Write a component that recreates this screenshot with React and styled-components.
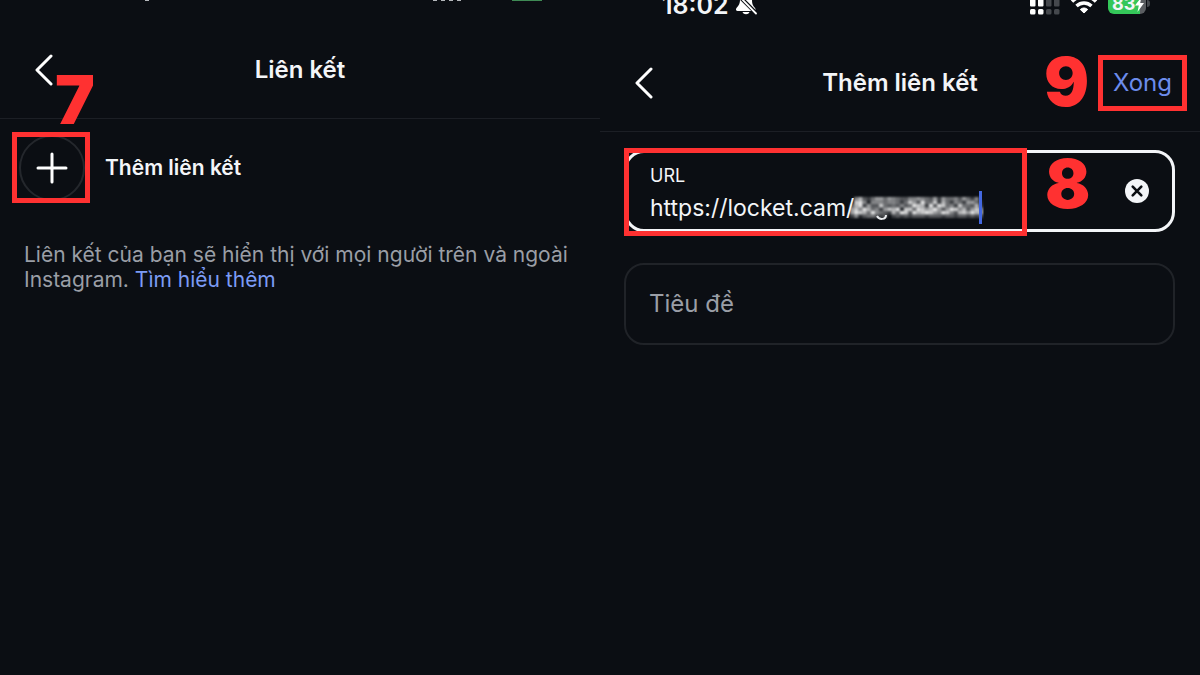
import React, { useState } from "react";
import styled, { createGlobalStyle } from "styled-components";

const GlobalStyle = createGlobalStyle`
  * {
    box-sizing: border-box;
  }
  body {
    margin: 0;
    background: #0b0e13;
    color: #f3f5f8;
    font-family: Inter, "Noto Sans", sans-serif;
  }
  button, input {
    font: inherit;
    color: inherit;
    background: none;
    border: none;
    padding: 0;
  }
  button {
    cursor: pointer;
  }
`;

const Screens = styled.main`
  display: grid;
  grid-template-columns: 1fr 1fr;
  min-height: 100vh;
`;

const Screen = styled.section`
  min-width: 0;
`;

const StatusBar = styled.div`
  display: flex;
  align-items: flex-end;
  justify-content: space-between;
  height: ${(p) => p.$height};
  padding: ${(p) => p.$padding};
  overflow: hidden;
`;

const StatusGroup = styled.div`
  display: flex;
  align-items: flex-end;
  gap: ${(p) => p.$gap || "4px"};
`;

const Clock = styled.span`
  font-size: 25px;
  font-weight: 600;
  line-height: 20px;
`;

const Header = styled.header`
  display: grid;
  grid-template-columns: 1fr auto 1fr;
  align-items: center;
  padding: 44px 28px 24px;
  border-bottom: 1px solid #1c1f25;
`;

const BackButton = styled.button`
  display: flex;
  justify-self: start;
  align-items: center;
  height: 48px;
`;

const Title = styled.h1`
  margin: 0;
  font-size: 24px;
  font-weight: 600;
  line-height: 32px;
`;

const Marked = styled.div`
  position: relative;
  display: flex;
  justify-self: end;
`;

const MarkBox = styled.span`
  position: absolute;
  inset: ${(p) => p.$inset};
  border: 5px solid #ff3131;
  pointer-events: none;
`;

const MarkNumber = styled.span`
  position: absolute;
  top: ${(p) => p.$top};
  left: ${(p) => p.$left};
  color: #ff3131;
  font-size: 67px;
  font-weight: 900;
  line-height: 70px;
  pointer-events: none;
`;

const DoneButton = styled.button`
  color: #6c8cec;
  font-size: 24px;
  line-height: 32px;
`;

const AddRow = styled.div`
  display: flex;
  align-items: center;
  gap: 20px;
  padding: 16px 19px;
`;

const AddButton = styled.button`
  display: flex;
  align-items: center;
  justify-content: center;
  width: 66px;
  height: 66px;
  border: 2px solid #24272c;
  border-radius: 50%;
`;

const AddLabel = styled.label`
  font-size: 21px;
  font-weight: 600;
  line-height: 28px;
  cursor: pointer;
`;

const Note = styled.p`
  margin: 0;
  padding: 25px 24px;
  color: #9a9ea6;
  font-size: 21px;
  line-height: 25px;
`;

const NoteLink = styled.a`
  color: #7c9cf5;
  text-decoration: none;
`;

const Form = styled.form`
  display: flex;
  flex-direction: column;
  gap: 31px;
  padding: 18px 25px 18px 24px;
`;

const Field = styled.div`
  position: relative;
  display: flex;
  align-items: center;
  justify-content: space-between;
  height: 82px;
  padding: 0 23px;
  border: ${(p) => (p.$active ? "3px solid #f3f5f8" : "2px solid #202328")};
  border-radius: 20px;
`;

const UrlBlock = styled.div`
  padding-top: 5px;
`;

const FieldLabel = styled.label`
  display: block;
  font-size: 18px;
  line-height: 28px;
`;

const UrlLine = styled.div`
  display: flex;
  align-items: center;
  height: 36px;
`;

const UrlInput = styled.input`
  field-sizing: content;
  font-size: 23px;
  line-height: 32px;
  outline: none;
`;

const Caret = styled.span`
  width: 3px;
  height: 33px;
  margin-left: -5px;
  background: #4468e0;
`;

const TitleInput = styled.input`
  flex: 1;
  min-width: 0;
  font-size: 24px;
  line-height: 32px;
  outline: none;

  &::placeholder {
    color: #9a9ea6;
    opacity: 1;
  }
`;

const ClearButton = styled.button`
  display: flex;
`;

function BackIcon() {
  return (
    <svg width="32" height="32" viewBox="0 0 32 32" fill="none">
      <path
        d="M23 2L9 16L23 30"
        stroke="#fff"
        strokeWidth="3"
        strokeLinecap="round"
        strokeLinejoin="round"
      />
    </svg>
  );
}

function PlusIcon() {
  return (
    <svg width="32" height="32" viewBox="0 0 32 32">
      <path d="M16 2V30M2 16H30" stroke="#fff" strokeWidth="3" strokeLinecap="round" />
    </svg>
  );
}

function ClearIcon() {
  return (
    <svg width="24" height="24" viewBox="0 0 24 24">
      <circle cx="12" cy="12" r="12" fill="#f3f5f8" />
      <path d="M7.7 7.7L16.3 16.3M16.3 7.7L7.7 16.3" stroke="#0b0e13" strokeWidth="2.6" strokeLinecap="round" />
    </svg>
  );
}

function MutedBellIcon() {
  return (
    <svg width="22" height="20" viewBox="0 0 22 20">
      <path
        d="M11 -4C7 -4 5 0 5 4C5 9 4 10 1.5 13C0.5 14.5 1 16 2.5 16H19C20.5 16 21 14.5 20 13C17.5 10 17 9 17 4C17 0 15 -4 11 -4Z"
        fill="#fff"
      />
      <path d="M7.5 17H14.5C13.5 20 8.5 20 7.5 17Z" fill="#fff" />
      <path d="M3 0L22 19" stroke="#0b0e13" strokeWidth="4" />
      <path d="M3 0L21 18.5" stroke="#fff" strokeWidth="1.8" strokeLinecap="round" />
    </svg>
  );
}

function SignalIcon() {
  return (
    <svg width="30" height="15" viewBox="0 0 30 15">
      {[0, 8, 16, 24].map((x, i) => (
        <g key={x} fill={i < 2 ? "#fff" : "#45484d"}>
          <rect x={x} y="-2" width="5.5" height="8.5" rx="1" />
          <rect x={x} y="9" width="5.5" height="5.5" rx="1.5" />
        </g>
      ))}
    </svg>
  );
}

function WifiIcon() {
  return (
    <svg width="28" height="20" viewBox="0 0 28 20">
      <path d="M2 6.5C9 -0.5 19 -0.5 26 6.5" stroke="#fff" strokeWidth="3.5" fill="none" />
      <path d="M6.5 11C11 7 17 7 21.5 11" stroke="#fff" strokeWidth="3.5" fill="none" />
      <path d="M14 18L10.3 14.5C12.5 12.5 15.5 12.5 17.7 14.5Z" fill="#fff" stroke="#fff" strokeLinejoin="round" />
    </svg>
  );
}

const Battery = styled.div`
  display: flex;
  align-items: center;
  width: 38px;
  height: 20px;
  margin-bottom: 1px;
  padding-left: 4px;
  border-radius: 6px;
  background: linear-gradient(to right, #34c759 83%, #5b5e62 83%);
  font-size: 18px;
  font-weight: 700;
  line-height: 20px;
`;

const BatteryTip = styled.span`
  width: 3px;
  height: 7px;
  margin: 0 0 8px -3px;
  border-radius: 0 3px 3px 0;
  background: #45484d;
`;

const BatteryEdge = styled.span`
  width: 30px;
  height: 1px;
  margin-bottom: 1px;
  background: #3f8a55;
`;

const Dot = styled.span`
  width: 4px;
  height: 1px;
  margin-bottom: 1px;
  background: #b5b8bc;
`;

function BoltIcon() {
  return (
    <svg width="9" height="15" viewBox="0 0 9 15">
      <path d="M6.5 0L0 8.5H3.8L2.5 15L9 6H5.2Z" fill="#fff" />
    </svg>
  );
}

// brightness of each cell, 0-9, row by row
const MOSAIC = [
  "05732466465433556543626445364250",
  "08951555455424863944827425426641",
  "37926338434353498729398452844372",
  "68597452687918849867963698573687",
  "69874954327498397898659853786978",
  "25134432302323233323332332332323",
];

function HiddenText() {
  return (
    <svg width="136" height="33" viewBox="0 0 136 33">
      <filter id="soften">
        <feGaussianBlur stdDeviation="0.8" />
      </filter>
      <g filter="url(#soften)">
        {MOSAIC.map((row, y) =>
          [...row].map((level, x) => (
            <rect
              key={`${x}-${y}`}
              x={2 + x * 4.15}
              y={6 + y * 3.5}
              width="4.2"
              height="3.5"
              fill="#fff"
              opacity={level / 10}
            />
          ))
        )}
      </g>
      <path d="M29 25C31 29 38 29 38 24" stroke="#e8eaed" strokeWidth="2" fill="none" />
    </svg>
  );
}

const HiddenTail = styled.span`
  display: flex;
  margin-left: -6px;
`;

function LinksScreen() {
  return (
    <Screen>
      <StatusBar $height="2px" $padding="0 58px 0 145px">
        <Dot />
        <StatusGroup $gap="51px">
          <StatusGroup>
            <Dot />
            <Dot />
            <Dot />
            <Dot />
          </StatusGroup>
          <BatteryEdge />
        </StatusGroup>
      </StatusBar>
      <Header>
        <BackButton aria-label="Quay lại">
          <BackIcon />
        </BackButton>
        <Title>Liên kết</Title>
      </Header>
      <AddRow>
        <Marked>
          <AddButton id="add-link">
            <PlusIcon />
          </AddButton>
          <MarkBox $inset="-3px -5px -2px -7px" />
          <MarkNumber $top="-70px" $left="36px">7</MarkNumber>
        </Marked>
        <AddLabel htmlFor="add-link">Thêm liên kết</AddLabel>
      </AddRow>
      <Note>
        Liên kết của bạn sẽ hiển thị với mọi người trên và ngoài Instagram.{" "}
        <NoteLink href="#help">Tìm hiểu thêm</NoteLink>
      </Note>
    </Screen>
  );
}

function AddLinkScreen() {
  const [url, setUrl] = useState("https://locket.cam/");
  const [title, setTitle] = useState("");

  return (
    <Screen>
      <StatusBar $height="15px" $padding="0 50px 0 62px">
        <StatusGroup $gap="6px">
          <Clock>18:02</Clock>
          <MutedBellIcon />
        </StatusGroup>
        <StatusGroup $gap="10px">
          <SignalIcon />
          <WifiIcon />
          <StatusGroup>
            <Battery>
              83
              <BoltIcon />
            </Battery>
            <BatteryTip />
          </StatusGroup>
        </StatusGroup>
      </StatusBar>
      <Header>
        <BackButton aria-label="Quay lại">
          <BackIcon />
        </BackButton>
        <Title>Thêm liên kết</Title>
        <Marked>
          <DoneButton type="submit" form="link-form">Xong</DoneButton>
          <MarkBox $inset="-12px -15px" />
          <MarkNumber $top="-20px" $left="-69px">9</MarkNumber>
        </Marked>
      </Header>
      <Form id="link-form" onSubmit={(e) => e.preventDefault()}>
        <Field $active>
          <UrlBlock>
            <FieldLabel htmlFor="url">URL</FieldLabel>
            <UrlLine>
              <UrlInput id="url" value={url} onChange={(e) => setUrl(e.target.value)} />
              <HiddenTail>
                <HiddenText />
              </HiddenTail>
              <Caret />
            </UrlLine>
          </UrlBlock>
          <ClearButton type="button" aria-label="Xóa" onClick={() => setUrl("")}>
            <ClearIcon />
          </ClearButton>
          <MarkBox $inset="-5px 145px -7px -3px" />
          <MarkNumber $top="-4px" $left="418px">8</MarkNumber>
        </Field>
        <Field>
          <TitleInput
            aria-label="Tiêu đề"
            placeholder="Tiêu đề"
            value={title}
            onChange={(e) => setTitle(e.target.value)}
          />
        </Field>
      </Form>
    </Screen>
  );
}

export default function App() {
  return (
    <>
      <GlobalStyle />
      <Screens>
        <LinksScreen />
        <AddLinkScreen />
      </Screens>
    </>
  );
}
